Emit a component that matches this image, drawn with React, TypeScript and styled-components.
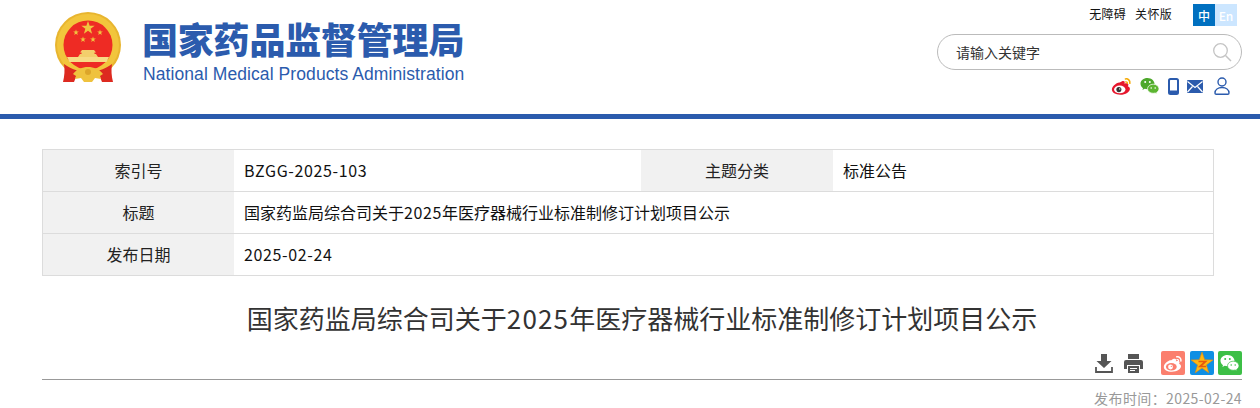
import styled, { createGlobalStyle } from 'styled-components'

const BLUE = '#2b5bad'
const CJK = `'Noto Sans CJK SC', 'Liberation Sans', sans-serif`

const GlobalStyle = createGlobalStyle`
  html, body {
    margin: 0;
    padding: 0;
    background: #fff;
    font-family: ${CJK};
    overflow: hidden;
  }
`

const rows = [
  [
    { label: '索引号', value: 'BZGG-2025-103' },
    { label: '主题分类', value: '标准公告' }
  ],
  [{ label: '标题', value: '国家药监局综合司关于2025年医疗器械行业标准制修订计划项目公示' }],
  [{ label: '发布日期', value: '2025-02-24' }]
]

function starPoints(cx: number, cy: number, r: number) {
  const pts: string[] = []
  for (let i = 0; i < 10; i++) {
    const rad = i % 2 === 0 ? r : r * 0.4
    const a = (Math.PI / 5) * i - Math.PI / 2
    pts.push(`${(cx + rad * Math.cos(a)).toFixed(2)},${(cy + rad * Math.sin(a)).toFixed(2)}`)
  }
  return pts.join(' ')
}

// digits and latin runs are a little wider in the original font
function renderValue(value: string) {
  return value.split(/([A-Z0-9-]+)/).map((part, index) =>
    index % 2 === 1 ? <MetaNum key={index}>{part}</MetaNum> : part
  )
}

function Emblem() {
  return (
    <svg width="66" height="70" viewBox="0 0 66 70">
      <circle cx="33" cy="33" r="33" fill="#e8b52f" />
      <circle cx="33" cy="33" r="31" fill="#f2c53c" />
      <circle cx="33" cy="33" r="24.500" fill="#ee2b24" />
      <polygon points={starPoints(33, 16, 7)} fill="#f0c540" />
      <polygon points={starPoints(21, 20.500, 3)} fill="#f0c540" />
      <polygon points={starPoints(45, 20.500, 3)} fill="#f0c540" />
      <polygon points={starPoints(28, 27.500, 3)} fill="#f0c540" />
      <polygon points={starPoints(38, 27.500, 3)} fill="#f0c540" />
      <path d="M27 38h12l2 2.500h-1.500V42H41l2 3H23l2-3h1.500v-1.500H25z" fill="#f3cf6c" />
      <path d="M12 45h42l-2.500 5h-37z" fill="#f7db85" />
      <path d="M9 52c4 3 8 5 13 6.500L23 60l-4 10H8c1.500-6 2-12 1-18zM57 52c-4 3-8 5-13 6.500L43 60l4 10h11c-1.500-6-2-12-1-18z" fill="#dd2a20" />
      <path d="M18 62c4-5 9-7 15-7s11 2 15 7l-3 2 1 3-6-1-3 4h-8l-3-4-6 1 1-3z" fill="#efc23e" />
      <circle cx="33" cy="60" r="3" fill="#dca52a" />
    </svg>
  )
}

interface WeiboProps {
  size: number
  color?: string
  eye?: string
  pupil?: string
  arc?: string
}

function WeiboIcon({ size, color = '#e6162d', eye = '#fff', pupil = '#333', arc = '#f5a800' }: WeiboProps) {
  return (
    <svg width={size} height={size * 0.85} viewBox="0 0 24 20">
      <path
        d="M10 6.200c2.400-2 4.700-2.300 5.500-1.200.4.700.2 1.600-.1 2.500 2-.8 3.900-.6 4.400.7.3.8 0 1.500-.6 2.200 1.500.5 2.400 1.500 2.400 3 0 3.200-4.800 6.600-11 6.600C5 20 1 17.600 1 13.800 1 11.500 3 9.600 5 8c1.800-1.400 3.600-2.300 5-1.800z"
        fill={color}
      />
      <ellipse cx="10" cy="14" rx="6.500" ry="4.500" fill={eye} />
      <circle cx="9" cy="14.200" r="2.900" fill={pupil} />
      <circle cx="10" cy="13.400" r=".8" fill={eye} />
      <path d="M16.500 2c3-.6 5.500 1.800 5 5" fill="none" stroke={arc} strokeWidth="1.800" strokeLinecap="round" />
      <path d="M16.800 5.300c1.300-.2 2.100.7 1.900 1.900" fill="none" stroke={arc} strokeWidth="1.500" strokeLinecap="round" />
    </svg>
  )
}

interface BubbleProps {
  width: number
  back: string
  front: string
  eye: string
  edge: string
}

function WechatBubbles({ width, back, front, eye, edge }: BubbleProps) {
  return (
    <svg width={width} height={width * 0.9} viewBox="0 0 20 18">
      <path d="M7.500 1C3.400 1 .5 3.500.5 6.800c0 1.800 1 3.400 2.500 4.400L2.400 13l2.300-1.200c.9.300 1.800.4 2.800.4 4 0 7-2.400 7-5.400S11.500 1 7.500 1z" fill={back} />
      <path d="M13.200 7.200c-3.200 0-5.700 2.100-5.700 4.600s2.500 4.500 5.700 4.500c.7 0 1.400-.1 2-.3l1.900 1-.5-1.500c1.400-.9 2.400-2.200 2.400-3.700 0-2.500-2.600-4.600-5.800-4.600z" fill={front} stroke={edge} strokeWidth=".7" />
      <circle cx="5.200" cy="5" r="1" fill={eye} />
      <circle cx="9.800" cy="5" r="1" fill={eye} />
      <circle cx="11.200" cy="11" r=".8" fill={eye} />
      <circle cx="15.200" cy="11" r=".8" fill={eye} />
    </svg>
  )
}

function PhoneIcon() {
  return (
    <svg width="11" height="17" viewBox="0 0 11 17">
      <rect x="1" y="1" width="9" height="15" rx="1.500" fill="none" stroke={BLUE} strokeWidth="2" />
      <rect x="1" y="12.500" width="9" height="3.500" fill={BLUE} />
    </svg>
  )
}

function MailIcon() {
  return (
    <svg width="16" height="13" viewBox="0 0 16 13">
      <rect width="16" height="13" rx="1" fill={BLUE} />
      <path d="M.5 1.500 8 7.500l7.500-6M.5 12 5.500 6.500M15.500 12l-5-5.500" fill="none" stroke="#fff" strokeWidth="1.200" />
    </svg>
  )
}

function UserIcon() {
  return (
    <svg width="16" height="18" viewBox="0 0 16 18">
      <circle cx="8" cy="5" r="4" fill="none" stroke={BLUE} strokeWidth="1.400" />
      <path d="M1 16c0-3.500 3-5.500 7-5.500s7 2 7 5.500c0 .8-.5 1.200-1.200 1.200H2.200C1.500 17.200 1 16.800 1 16z" fill="none" stroke={BLUE} strokeWidth="1.400" />
    </svg>
  )
}

function SearchIcon() {
  return (
    <svg width="20" height="20" viewBox="0 0 20 20">
      <circle cx="8.500" cy="8.500" r="6.800" fill="none" stroke="#c4c4c4" strokeWidth="1.300" />
      <path d="m13.500 13.500 5.500 5.500" stroke="#c4c4c4" strokeWidth="1.500" />
    </svg>
  )
}

function DownloadIcon() {
  return (
    <svg width="18" height="19" viewBox="0 0 18 19">
      <path d="M6 0h6v7h4.500L9 14 1.500 7H6z" fill="#555" />
      <path d="M1 13v5h16v-5" fill="none" stroke="#555" strokeWidth="1.800" />
    </svg>
  )
}

function PrintIcon() {
  return (
    <svg width="19" height="19" viewBox="0 0 19 19">
      <path d="M4 0h11v5H4z" fill="#555" />
      <path d="M2 6h15a2 2 0 0 1 2 2v7h-3v-4H3v4H0V8a2 2 0 0 1 2-2z" fill="#555" />
      <path d="M4 12h11v7H4z" fill="#555" />
      <path d="M6 14h7v1H6zM6 16h5v1H6z" fill="#fff" />
    </svg>
  )
}

function QzoneStar() {
  return (
    <svg width="22" height="22" viewBox="0 0 22 22">
      <polygon points={starPoints(11, 11.500, 11.500)} fill="#fdb813" stroke="#e8890c" strokeWidth=".6" />
      <path d="M7.500 9.500h7L9 14.500h6" fill="none" stroke="#e8590c" strokeWidth="1.700" />
    </svg>
  )
}

export default function App() {
  return (
    <>
      <GlobalStyle />
      <Header>
        <Brand>
          <Emblem />
          <BrandText>
            <BrandCn>国家药品监督管理局</BrandCn>
            <BrandEn>National Medical Products Administration</BrandEn>
          </BrandText>
        </Brand>
        <Tools>
          <TopLinks>
            <TopLink>无障碍</TopLink>
            <TopLink>关怀版</TopLink>
            <LangSwitch>
              <LangItem active>中</LangItem>
              <LangItem>En</LangItem>
            </LangSwitch>
          </TopLinks>
          <SearchBox>
            <SearchText>请输入关键字</SearchText>
            <SearchIcon />
          </SearchBox>
          <SocialRow>
            <WeiboIcon size={21} />
            <WechatBubbles width={20} back="#4da82b" front="#5cb531" eye="#fff" edge="#fff" />
            <PhoneIcon />
            <MailIcon />
            <UserSlot>
              <UserIcon />
            </UserSlot>
          </SocialRow>
        </Tools>
      </Header>

      <Main>
        <MetaTable>
          {rows.map((row, rowIndex) => (
            <MetaRow key={rowIndex} last={rowIndex === rows.length - 1}>
              {row.map((cell, cellIndex) => (
                <MetaGroup key={cell.label} wide={row.length === 1}>
                  <MetaLabel second={cellIndex === 1}>{cell.label}</MetaLabel>
                  <MetaValue>{renderValue(cell.value)}</MetaValue>
                </MetaGroup>
              ))}
            </MetaRow>
          ))}
        </MetaTable>

        <Title>
          国家药监局综合司关于<TitleNum>2025</TitleNum>年医疗器械行业标准制修订计划项目公示
        </Title>

        <ActionBar>
          <PlainActions>
            <DownloadIcon />
            <PrintIcon />
          </PlainActions>
          <ShareActions>
            <ShareTile color="#fb7f6e">
              <WeiboIcon size={20} color="#fff" eye="#fb7f6e" pupil="#fff" arc="#fff" />
            </ShareTile>
            <ShareTile color="#0f8fe4">
              <QzoneStar />
            </ShareTile>
            <ShareTile color="#3cbf46">
              <WechatBubbles width={20} back="#fff" front="#fff" eye="#3cbf46" edge="#3cbf46" />
            </ShareTile>
          </ShareActions>
        </ActionBar>

        <PublishTime>发布时间：2025-02-24</PublishTime>
      </Main>
    </>
  )
}

const Header = styled.header`
  height: 114px;
  border-bottom: 5px solid ${BLUE};
  padding: 0 18px 0 55px;
  display: flex;
  justify-content: space-between;
`

const Brand = styled.div`
  display: flex;
  align-items: flex-start;
  gap: 21px;
  padding-top: 12px;
`

const BrandText = styled.div`
  display: flex;
  flex-direction: column;
  padding-top: 6px;
`

const BrandCn = styled.div`
  font-size: 36px;
  line-height: 40px;
  font-weight: 900;
  color: ${BLUE};
  white-space: nowrap;
  letter-spacing: -0.2px;
`

const BrandEn = styled.div`
  margin: 6px 0 0 1px;
  font-family: 'Liberation Sans', sans-serif;
  font-size: 17.5px;
  line-height: 20px;
  color: ${BLUE};
  white-space: nowrap;
  letter-spacing: 0.08px;
`

const Tools = styled.div`
  width: 305px;
  display: flex;
  flex-direction: column;
`

const TopLinks = styled.div`
  height: 22px;
  margin-top: 3px;
  padding-right: 5px;
  display: flex;
  justify-content: flex-end;
  align-items: center;
  gap: 9px;
`

const TopLink = styled.span`
  font-size: 12px;
  line-height: 22px;
  color: #111;
  letter-spacing: 0.3px;
`

const LangSwitch = styled.div`
  margin: 1px 0 -1px 12px;
  display: flex;
`

const LangItem = styled.span<{ active?: boolean }>`
  width: 22px;
  height: 22px;
  display: flex;
  align-items: center;
  justify-content: center;
  font-size: 12px;
  font-weight: 500;
  color: #fff;
  background: ${({ active }) => (active ? '#0070c0' : '#cce6ff')};
`

const SearchBox = styled.div`
  box-sizing: border-box;
  height: 36px;
  margin-top: 9px;
  padding: 0 9px 0 18px;
  border: 1px solid #bbb;
  border-radius: 18px;
  display: flex;
  align-items: center;
  justify-content: space-between;
`

const SearchText = styled.span`
  font-size: 14px;
  color: #333;
`

const SocialRow = styled.div`
  margin-top: 7px;
  padding-right: 12px;
  display: flex;
  justify-content: flex-end;
  align-items: center;
  gap: 8px;
`

const UserSlot = styled.span`
  display: flex;
  margin-left: 3px;
`

const Main = styled.main`
  width: 1200px;
  margin: 30px 0 0 42px;
`

const MetaTable = styled.div`
  width: 1172px;
  box-sizing: border-box;
  border: 1px solid #dcdcdc;
`

const MetaRow = styled.div<{ last: boolean }>`
  box-sizing: border-box;
  height: ${({ last }) => (last ? '41px' : '42px')};
  display: flex;
  border-bottom: ${({ last }) => (last ? '0' : '1px solid #dcdcdc')};
`

const MetaGroup = styled.div<{ wide: boolean }>`
  display: flex;
  flex: 1 1 50%;
  &:first-child {
    flex: ${({ wide }) => (wide ? '1 1 100%' : '0 0 598px')};
  }
`

const MetaLabel = styled.div<{ second: boolean }>`
  flex: 0 0 ${({ second }) => (second ? '192px' : '191px')};
  padding-bottom: 1px;
  box-sizing: border-box;
  background: #f1f1f1;
  display: flex;
  align-items: center;
  justify-content: center;
  font-size: 16px;
  color: #222;
`

const MetaValue = styled.div`
  flex: 1;
  padding: 0 0 1px 10px;
  display: flex;
  align-items: center;
  font-size: 16px;
  color: #111;
  white-space: pre;
`

const MetaNum = styled.span`
  letter-spacing: 0.04em;
`

const Title = styled.h1`
  margin: 23px 0 0;
  font-size: 26px;
  line-height: 38px;
  font-weight: 400;
  color: #333;
  text-align: center;
  white-space: nowrap;
`

const TitleNum = styled.span`
  letter-spacing: 0.045em;
`

const ActionBar = styled.div`
  box-sizing: border-box;
  margin-top: 14px;
  height: 29px;
  border-bottom: 1px solid #999;
  display: flex;
  justify-content: flex-end;
  align-items: flex-start;
`

const PlainActions = styled.div`
  display: flex;
  align-items: center;
  gap: 11px;
  padding-top: 3px;
`

const ShareActions = styled.div`
  display: flex;
  gap: 4.500px;
  margin-left: 18px;
`

const ShareTile = styled.span<{ color: string }>`
  width: 24px;
  height: 24px;
  border-radius: 2px;
  background: ${({ color }) => color};
  display: flex;
  align-items: center;
  justify-content: center;
`

const PublishTime = styled.div`
  margin-top: 8px;
  font-size: 14px;
  line-height: 20px;
  color: #999;
  text-align: right;
  letter-spacing: 0.4px;
`
